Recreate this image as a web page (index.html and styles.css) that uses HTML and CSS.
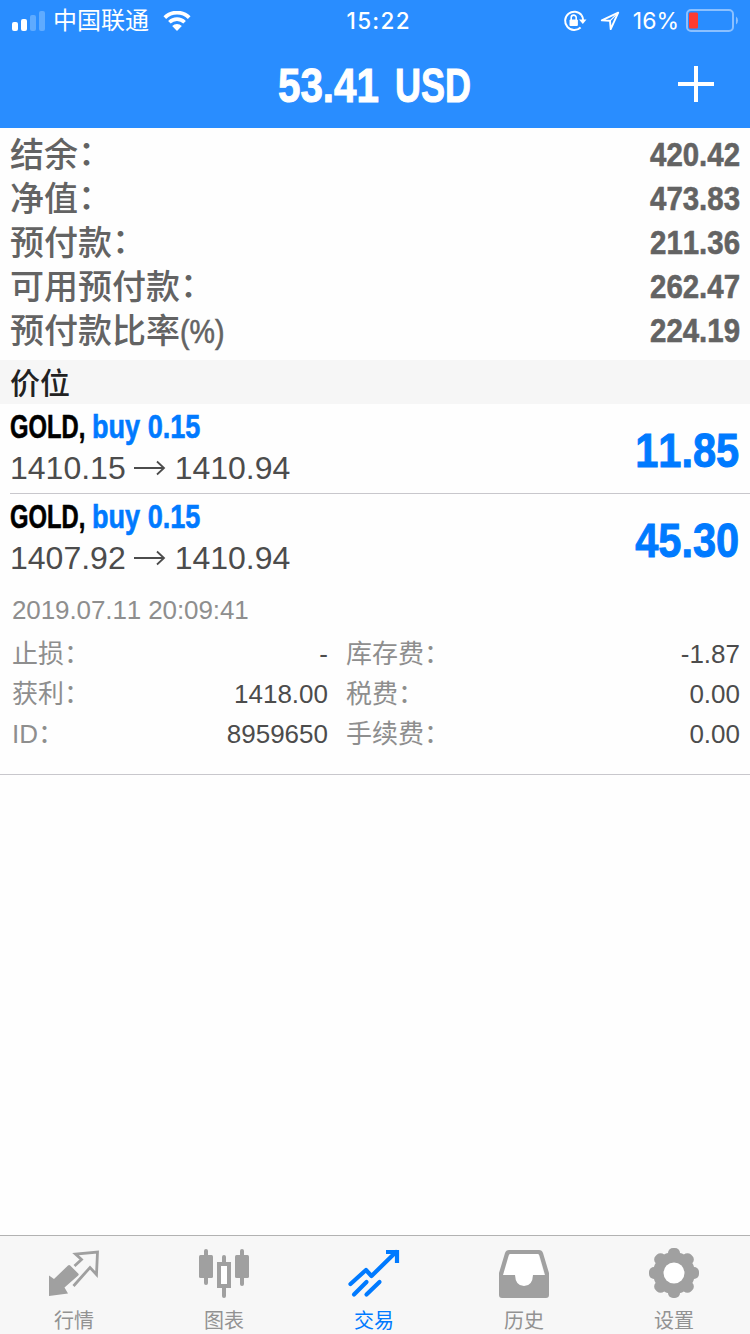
FILE: index.html
```
<!DOCTYPE html>
<html lang="zh-CN">

<head>
    <meta charset="UTF-8">
    <meta name="viewport" content="width=device-width, initial-scale=1.0">
    <title>交易</title>
    <link rel="stylesheet" href="styles.css">
</head>

<body>

    <header>
        <div class="status">
            <div class="status-left">
                <svg class="signal" width="34" height="22" viewBox="0 0 34 22">
                    <rect x="0" y="12" width="6" height="9" rx="2" fill="#fff" />
                    <rect x="9" y="9" width="6" height="12" rx="2" fill="#fff" />
                    <rect x="18" y="5" width="6" height="16" rx="2" fill="#5fabff" />
                    <rect x="27" y="1" width="6" height="20" rx="2" fill="#5fabff" />
                </svg>
                <span class="carrier">中国联通</span>
                <svg class="wifi" width="28" height="20" viewBox="0 0 28 20">
                    <path d="M1.8 6.6a17.4 17.4 0 0 1 24.4 0" fill="none" stroke="#fff" stroke-width="3.8" />
                    <path d="M6.4 11.3a10.8 10.8 0 0 1 15.2 0" fill="none" stroke="#fff" stroke-width="3.6" />
                    <path d="M14 20l-4.8-5a6.8 6.8 0 0 1 9.6 0z" fill="#fff" />
                </svg>
            </div>
            <div class="time">15:22</div>
            <div class="status-right">
                <svg class="lock" width="24" height="22" viewBox="0 0 24 22">
                    <path d="M18.6 5.2A9.2 9.2 0 1 0 17.6 17.6M18.6 5.2A9.2 9.2 0 0 1 20.1 10" fill="none" stroke="#fff" stroke-width="2" />
                    <path d="M16 9.6h7.5l-3.7 4.4z" fill="#fff" />
                    <rect x="6.5" y="9.5" width="8.4" height="6.5" rx="1" fill="#fff" />
                    <path d="M8.2 10V7.6a2.5 2.5 0 0 1 5 0V10" fill="none" stroke="#fff" stroke-width="1.6" />
                </svg>
                <svg class="arrow" width="20" height="20" viewBox="0 0 20 20">
                    <path d="M18.2 1.6L1.8 9.4l8.2.4.7 8.3z" fill="none" stroke="#fff" stroke-width="1.9" stroke-linejoin="round" />
                    <path d="M10 9.8l8.2-8.2" fill="none" stroke="#fff" stroke-width="1.2" />
                </svg>
                <span class="percent">16%</span>
                <svg class="battery" width="53" height="24" viewBox="0 0 53 24">
                    <rect x="1" y="1" width="46" height="21" rx="4" fill="none" stroke="#8bc0ff" stroke-width="2" />
                    <rect x="3" y="3.5" width="9" height="16" rx="1.5" fill="#ff3b30" />
                    <path d="M50 7.5a5 5 0 0 1 0 8z" fill="#8bc0ff" />
                </svg>
            </div>
        </div>
        <div class="title">
            <h1><span class="sum">53.41</span><span class="currency">USD</span></h1>
            <svg class="plus" width="38" height="38" viewBox="0 0 38 38">
                <path d="M19 1v36M1 19h36" stroke="#fff" stroke-width="4" />
            </svg>
        </div>
    </header>

    <main>
        <ul class="account">
            <li><span>结余<em>：</em></span><b>420.42</b></li>
            <li><span>净值<em>：</em></span><b>473.83</b></li>
            <li><span>预付款<em>：</em></span><b>211.36</b></li>
            <li><span>可用预付款<em>：</em></span><b>262.47</b></li>
            <li><span>预付款比率<i>(%)</i></span><b>224.19</b></li>
        </ul>

        <h2>价位</h2>

        <article class="line">
            <div>
                <h3><span class="symbol">GOLD,</span><span class="side">buy 0.15</span></h3>
                <p class="prices">
                    <span>1410.15</span>
                    <svg width="32" height="16" viewBox="0 0 32 16">
                        <path d="M0 8h30M23 1.5L30 8l-7 6.5" fill="none" stroke="#4c4c4c" stroke-width="1.8" />
                    </svg>
                    <span>1410.94</span>
                </p>
            </div>
            <strong>11.85</strong>
        </article>

        <article>
            <div>
                <h3><span class="symbol">GOLD,</span><span class="side">buy 0.15</span></h3>
                <p class="prices">
                    <span>1407.92</span>
                    <svg width="32" height="16" viewBox="0 0 32 16">
                        <path d="M0 8h30M23 1.5L30 8l-7 6.5" fill="none" stroke="#4c4c4c" stroke-width="1.8" />
                    </svg>
                    <span>1410.94</span>
                </p>
            </div>
            <strong>45.30</strong>
        </article>

        <section class="details">
            <time>2019.07.11 20:09:41</time>
            <dl>
                <dt>止损<em>：</em></dt>
                <dd>-</dd>
                <dt>库存费<em>：</em></dt>
                <dd>-1.87</dd>
                <dt>获利<em>：</em></dt>
                <dd>1418.00</dd>
                <dt>税费<em>：</em></dt>
                <dd>0.00</dd>
                <dt>ID<em>：</em></dt>
                <dd>8959650</dd>
                <dt>手续费<em>：</em></dt>
                <dd>0.00</dd>
            </dl>
        </section>
    </main>

    <nav>
        <div class="tab">
            <svg width="52" height="52" viewBox="0 0 52 52">
                <path d="M20 16.5q1.2-1 2.2 0l8 8q1 1 0 2L16.5 38.5l3.5 6L1 47V26.5l5 3.5z" fill="#a0a0a0" />
                <path d="M26.5 17l7-6.5-6-5.5L49.5 3l-1 22.5-6.5-7L25.5 37" fill="none" stroke="#a0a0a0" stroke-width="2.8" />
            </svg>
            <span>行情</span>
        </div>
        <div class="tab">
            <svg width="52" height="52" viewBox="0 0 52 52">
                <g fill="#a0a0a0">
                    <rect x="1" y="6" width="14" height="23" rx="1.5" />
                    <rect x="6" y="0" width="4" height="36" rx="2" />
                    <rect x="37" y="6" width="14" height="23" rx="1.5" />
                    <rect x="42" y="0" width="4" height="37" rx="2" />
                    <rect x="24" y="6" width="4" height="10" rx="2" />
                    <rect x="24" y="37" width="4" height="12" rx="2" />
                </g>
                <rect x="21" y="15" width="10" height="22" fill="#fff" stroke="#a0a0a0" stroke-width="4" />
            </svg>
            <span>图表</span>
        </div>
        <div class="tab active">
            <svg width="52" height="52" viewBox="0 0 52 52">
                <g fill="none" stroke="#007aff" stroke-width="4.2">
                    <path d="M2.5 35L18 21l5.5 6L48 3" stroke-linecap="round" stroke-linejoin="round" />
                    <path d="M38 3h11v11" />
                    <path d="M6 45.5L18.5 33M18.5 45.5L31.5 33" stroke-linecap="round" />
                </g>
            </svg>
            <span>交易</span>
        </div>
        <div class="tab">
            <svg width="52" height="52" viewBox="0 0 52 52">
                <path d="M12 4h28l6 22-10 12H14L5 26z" fill="#fff" />
                <path d="M11 1h30q3 0 4 3l6 20v22q0 3-3 3H4q-3 0-3-3V24L7 4q1-3 4-3zM12 5Q11 5 10.5 7L5 26h12q.5 11 9 11t9-11H47L41.5 7Q41 5 40 5z" fill="#a0a0a0" fill-rule="evenodd" />
            </svg>
            <span>历史</span>
        </div>
        <div class="tab">
            <svg width="52" height="52" viewBox="0 0 52 52">
                <g fill="#a0a0a0">
                    <circle cx="26" cy="24" r="21" />
                    <rect x="20" y="-1" width="12" height="50" rx="5" />
                    <rect x="20" y="-1" width="12" height="50" rx="5" transform="rotate(45 26 24)" />
                    <rect x="20" y="-1" width="12" height="50" rx="5" transform="rotate(90 26 24)" />
                    <rect x="20" y="-1" width="12" height="50" rx="5" transform="rotate(135 26 24)" />
                </g>
                <circle cx="26" cy="24" r="10.5" fill="#fff" />
            </svg>
            <span>设置</span>
        </div>
    </nav>

</body>

</html>
```
FILE: styles.css
```
* {
    margin: 0;
    padding: 0;
    box-sizing: border-box;
}

body {
    display: flex;
    flex-direction: column;
    height: 100vh;
    overflow: hidden;
    background-color: #fefefe;
    font-family: "Liberation Sans", "Noto Sans CJK SC", sans-serif;
    font-kerning: none;
}

header {
    height: 128px;
    background-color: #298dff;
    color: white;
}

.status {
    height: 42px;
    display: grid;
    grid-template-columns: 1fr 64px 1fr;
    align-items: center;
    padding: 0 11px 0 12px;
}

.status-left,
.status-right {
    display: flex;
    align-items: center;
}

.status-right {
    justify-content: flex-end;
}

.signal,
.wifi,
.lock,
.arrow,
.battery {
    margin-bottom: 1px;
}

.carrier {
    font-size: 24px;
    line-height: 40px;
    margin-left: 7px;
}

.wifi {
    margin-left: 14px;
}

.time {
    padding: 0 0 2px 3px;
    font-family: Inter, sans-serif;
    font-size: 22.5px;
    font-weight: 500;
    letter-spacing: 1.3px;
    white-space: nowrap;
}

.arrow {
    margin-left: 13px;
}

.percent {
    font-family: Inter, sans-serif;
    font-size: 23px;
    margin-left: 13px;
}

.battery {
    margin-left: 7px;
}

.title {
    height: 86px;
    display: grid;
    grid-template-columns: 1fr 194px 1fr;
    align-items: center;
    padding: 0 35px;
}

h1 {
    grid-column: 2;
    display: flex;
    font-size: 48px;
    line-height: 87px;
}

/* condensed bold figures */
.sum,
.currency,
.symbol,
.side,
.account b,
.account i,
strong {
    white-space: nowrap;
    transform-origin: left;
    -webkit-text-stroke: .6px;
}

.sum {
    width: 117px;
    transform: scaleX(.84);
}

.currency {
    transform: scaleX(.75);
}

.sum,
.currency,
strong {
    -webkit-text-stroke: 1px;
}

.plus {
    justify-self: end;
    margin-bottom: 4px;
}

.account {
    list-style: none;
    padding: 4px 10px 8px;
}

.account li {
    display: flex;
    justify-content: space-between;
    height: 44px;
    font-size: 34px;
    line-height: 44px;
    font-weight: 500;
    color: #636363;
}

.account li span {
    padding-top: 1px;
}

em {
    font-style: normal;
    line-height: 1;
    font-feature-settings: "halt";
}

.account em {
    vertical-align: 2px;
}

.account i {
    display: inline-block;
    font-style: normal;
    transform: scaleX(.84);
}

.account b,
strong {
    transform: scaleX(.865);
    transform-origin: right;
}

h2 {
    height: 44px;
    padding-left: 10px;
    background-color: #f6f6f6;
    color: #222;
    font-size: 30px;
    font-weight: 500;
    line-height: 47px;
}

article {
    display: flex;
    justify-content: space-between;
    height: 90px;
    margin-left: 10px;
    padding-right: 11px;
}

.line {
    border-bottom: 1px solid #c8c7cc;
}

h3 {
    display: flex;
    height: 44px;
    font-size: 33px;
    line-height: 46px;
}

.symbol {
    width: 82px;
    color: black;
    transform: scaleX(.72);
}

.side {
    color: #007aff;
    transform: scaleX(.82);
}

.prices {
    display: flex;
    align-items: center;
    gap: 8.5px;
    height: 40px;
    font-size: 32px;
    line-height: 40px;
    color: #4c4c4c;
}

strong {
    color: #007aff;
    font-size: 48px;
    line-height: 93px;
}

.details {
    height: 191px;
    padding: 6px 10px 0 12px;
    border-bottom: 1px solid #c8c7cc;
    font-size: 26px;
    color: #8e8e8e;
}

time {
    display: block;
    height: 44px;
    line-height: 40px;
    letter-spacing: -.1px;
}

dl {
    display: grid;
    grid-template-columns: 158px 158px 158px 1fr;
    grid-auto-rows: 40px;
    line-height: 40px;
}

dt:nth-of-type(even) {
    padding-left: 18px;
}

dd {
    text-align: right;
    color: #4c4c4c;
}

nav {
    display: flex;
    height: 99px;
    margin-top: auto;
    background-color: #f7f7f7;
    border-top: 1px solid #b2b2b2;
}

.tab {
    display: flex;
    flex-direction: column;
    align-items: center;
    width: 150px;
    padding: 13px 2px 0 0;
    font-size: 20px;
    line-height: 40px;
    color: #929292;
}

.active {
    color: #007aff;
}

.tab svg {
    flex: none;
    overflow: visible;
}
```
